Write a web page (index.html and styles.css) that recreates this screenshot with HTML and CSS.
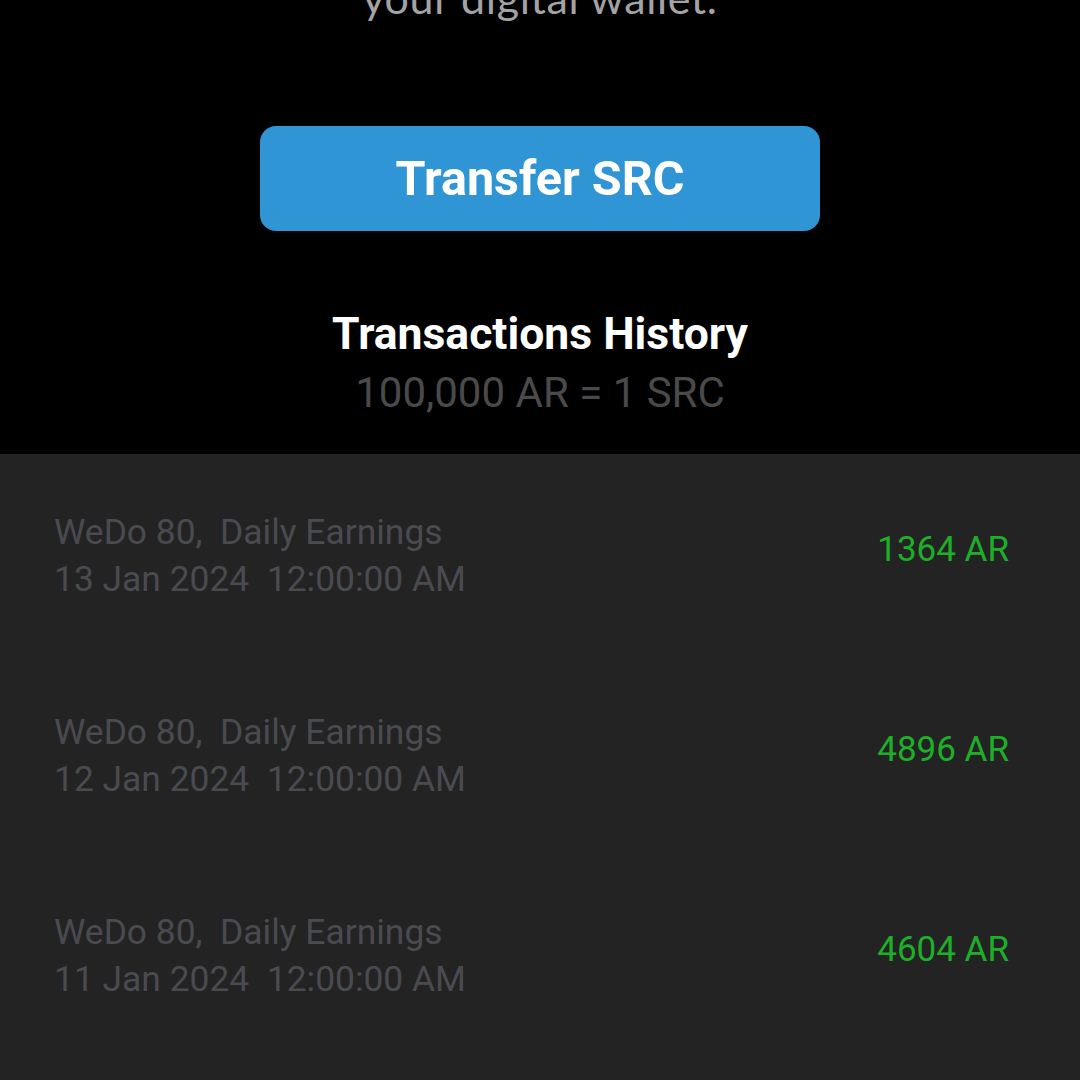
FILE: index.html
```html
<!DOCTYPE html>
<html lang="en">
<head>
<meta charset="utf-8">
<title>Wallet</title>
<link rel="stylesheet" href="styles.css">
</head>
<body>
<div class="screen">
  <section class="top">
    <p class="tagline">your digital wallet.</p>
    <button class="transfer">Transfer SRC</button>
    <h2 class="title">Transactions History</h2>
    <p class="rate">100,000 AR = 1 SRC</p>
  </section>
  <section class="list">
    <div class="row">
      <div class="info">
        <div class="line">WeDo 80,&nbsp; Daily Earnings</div>
        <div class="line">13 Jan 2024&nbsp; 12:00:00 AM</div>
      </div>
      <div class="amount">1364 AR</div>
    </div>
    <div class="row">
      <div class="info">
        <div class="line">WeDo 80,&nbsp; Daily Earnings</div>
        <div class="line">12 Jan 2024&nbsp; 12:00:00 AM</div>
      </div>
      <div class="amount">4896 AR</div>
    </div>
    <div class="row">
      <div class="info">
        <div class="line">WeDo 80,&nbsp; Daily Earnings</div>
        <div class="line">11 Jan 2024&nbsp; 12:00:00 AM</div>
      </div>
      <div class="amount">4604 AR</div>
    </div>
  </section>
</div>
</body>
</html>
```

FILE: styles.css
```css
html, body {
  margin: 0;
  padding: 0;
  background: #232323;
}
.screen {
  width: 1080px;
  height: 1080px;
  overflow: hidden;
  display: flex;
  flex-direction: column;
  font-family: Roboto, "Liberation Sans", sans-serif;
}
.top {
  background: #000;
  height: 454px;
  flex: none;
  display: flex;
  flex-direction: column;
  align-items: center;
}
.tagline {
  margin: -28px 0 0;
  font-family: Lato, "Open Sans", sans-serif;
  font-size: 43px;
  line-height: 52px;
  color: #a3a3a3;
  letter-spacing: 0.6px;
}
.transfer {
  margin-top: 102px;
  width: 560px;
  height: 105px;
  border: none;
  border-radius: 16px;
  background: #2f95d5;
  color: #fff;
  font-family: Roboto, "Liberation Sans", sans-serif;
  font-weight: 700;
  font-size: 48.5px;
  padding: 0;
}
.title {
  margin: 77px 0 0;
  font-size: 44.5px;
  line-height: 52px;
  font-weight: 700;
  color: #fff;
}
.rate {
  margin: 9px 0 0;
  font-size: 42px;
  line-height: 48px;
  color: #4a4a4a;
}
.list {
  flex: 1;
  background: #232323;
  padding: 55px 71px 0 54px;
  display: flex;
  flex-direction: column;
  gap: 106px;
}
.row {
  display: flex;
  justify-content: space-between;
  align-items: center;
  height: 94px;
}
.line {
  font-size: 35.4px;
  line-height: 47px;
  color: #4a4a51;
}
.amount {
  font-size: 35px;
  line-height: 47px;
  color: #1eaf28;
  margin-top: -13px;
}
```
